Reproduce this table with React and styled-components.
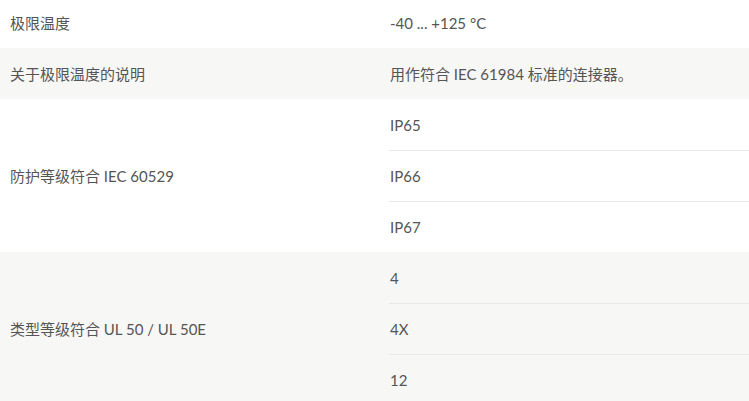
import React from 'react';
import styled, { createGlobalStyle } from 'styled-components';

const GlobalStyle = createGlobalStyle`
  body {
    margin: 0;
    background: #ffffff;
    font-family: Lato, "Noto Sans CJK SC", sans-serif;
    color: #555555;
    overflow: hidden;
  }
`;

const Table = styled.div`
  width: 749px;
  margin-top: -3px;
`;

const Row = styled.div`
  display: grid;
  grid-template-columns: 389px 1fr;
  background: ${(p) => (p.$shaded ? '#f7f7f5' : '#ffffff')};
`;

const Label = styled.div`
  display: flex;
  align-items: center;
  padding-left: 10px;
  font-size: 15px;
`;

const Values = styled.div`
  display: flex;
  flex-direction: column;
`;

const Value = styled.div`
  height: 51px;
  display: flex;
  align-items: center;
  padding-left: 1px;
  font-size: 15px;
  box-sizing: border-box;
  & + & {
    border-top: 1px solid #e9e9e7;
  }
`;

const rows = [
  { label: '极限温度', values: ['-40 ... +125 °C'] },
  { label: '关于极限温度的说明', values: ['用作符合 IEC 61984 标准的连接器。'] },
  { label: '防护等级符合 IEC 60529', values: ['IP65', 'IP66', 'IP67'] },
  { label: '类型等级符合 UL 50 / UL 50E', values: ['4', '4X', '12'] },
];

const App = () => {
  return (
    <>
      <GlobalStyle />
      <Table>
        {rows.map((row, i) => (
          <Row key={row.label} $shaded={i % 2 === 1}>
            <Label>{row.label}</Label>
            <Values>
              {row.values.map((v) => (
                <Value key={v}>{v}</Value>
              ))}
            </Values>
          </Row>
        ))}
      </Table>
    </>
  );
};

export default App;
